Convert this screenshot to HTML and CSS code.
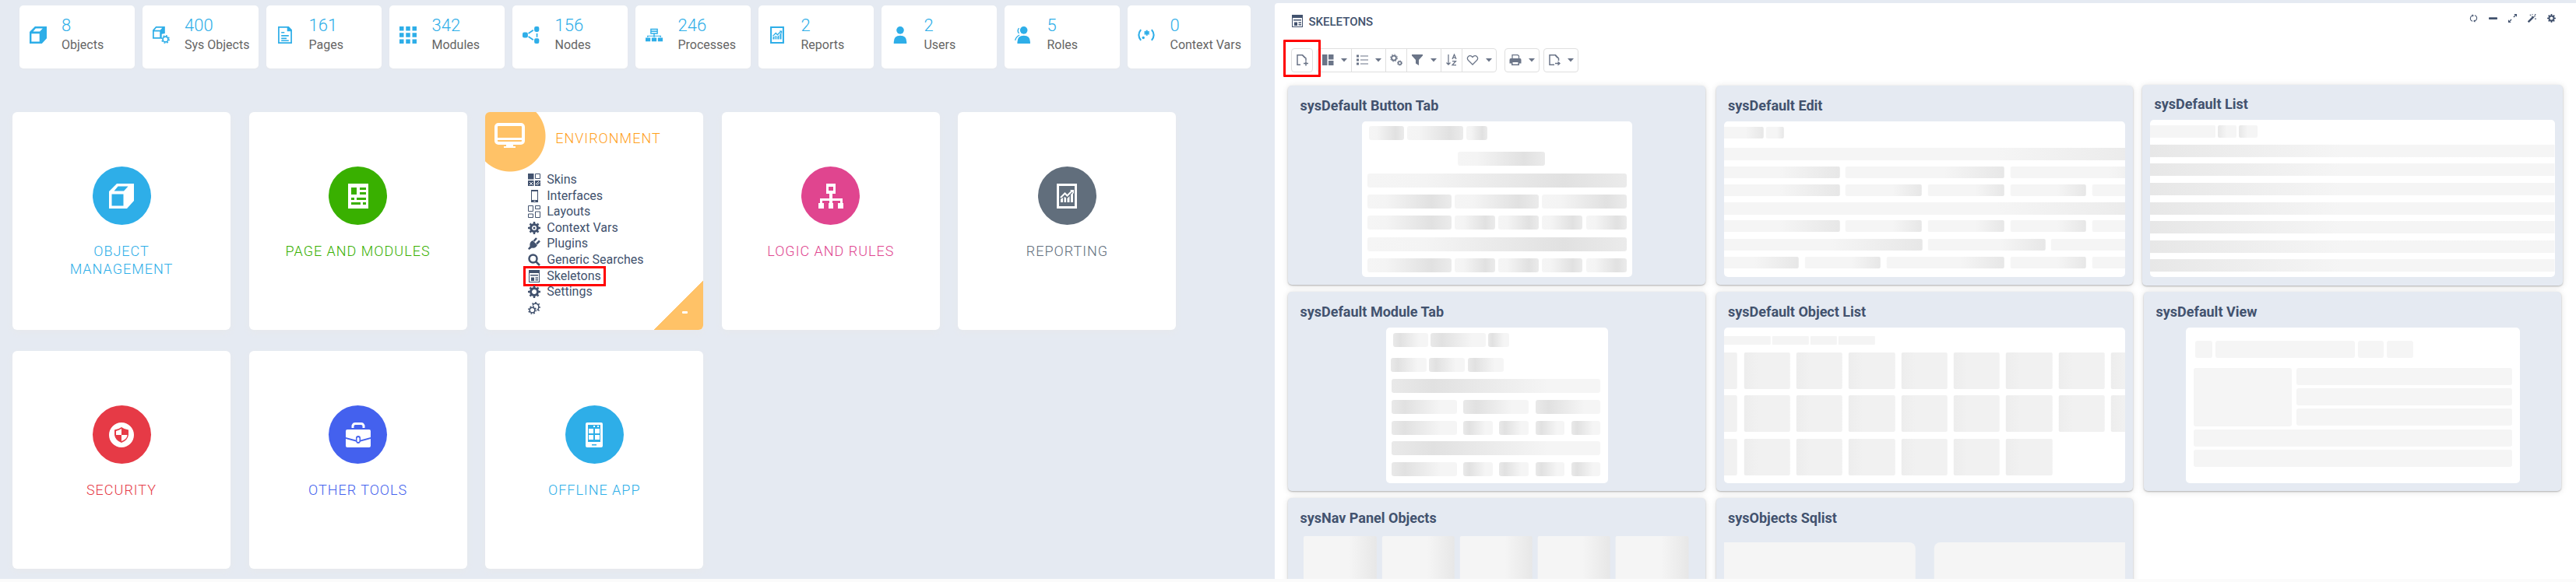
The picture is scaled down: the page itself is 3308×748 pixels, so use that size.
FILE: index.html
```html
<!DOCTYPE html>
<html lang="en">
<head>
<meta charset="utf-8">
<title>Skeletons</title>
<link rel="stylesheet" href="styles.css">
</head>
<body>
<svg class="defs" aria-hidden="true">
  <defs>
    <linearGradient id="g-right"><stop offset="0" stop-color="#f5f5f5"/><stop offset=".22" stop-color="#f4f4f4"/><stop offset=".76" stop-color="#e1e1e1"/><stop offset="1" stop-color="#ebebeb"/></linearGradient>
    <linearGradient id="g-end"><stop offset=".62" stop-color="#f5f5f5"/><stop offset="1" stop-color="#e7e7e7"/></linearGradient>
    <linearGradient id="g-start"><stop offset="0" stop-color="#e7e7e7"/><stop offset=".47" stop-color="#f5f5f5"/></linearGradient>
    <linearGradient id="g-left"><stop offset="0" stop-color="#e9e9e9"/><stop offset=".2" stop-color="#e1e1e1"/><stop offset=".75" stop-color="#f5f5f5"/></linearGradient>
    <linearGradient id="g-tile"><stop offset="0" stop-color="#ededed"/><stop offset=".3" stop-color="#f1f1f1"/></linearGradient>
    <symbol id="i-cube" viewBox="0 0 32 32"><path fill-rule="evenodd" d="M10 0H32V22L23 32H0V10zM11.500 3.500L6.500 9.500H19L24.500 3.500zM3.500 13.500V28.500H18.500V13.500z"/></symbol>
    <symbol id="i-cubegear" viewBox="0 0 32 32"><path fill-rule="evenodd" d="M6 0H23V13L17 14V22L16 23H0V7zM7 2.500L3.500 7H14L18 2.500zM2.500 9.500V20.500H13.500V9.500z"/><circle cx="24" cy="24" r="5" fill="none" stroke="currentColor" stroke-width="2.500"/><circle cx="24" cy="24" r="7" fill="none" stroke="currentColor" stroke-width="2" stroke-dasharray="2.750"/></symbol>
    <symbol id="i-page" viewBox="0 0 32 32"><path fill-rule="evenodd" d="M3 0H23L29 6V32H3zM5.500 2.500V29.500H26.500V9H20V2.500zM9 10H15V12.500H9zM9 16H23V18.500H9zM9 21H19V23.500H9zM9 25.500H23V27.500H9z"/></symbol>
    <symbol id="i-grid" viewBox="0 0 32 32"><path d="M0 0H8V8H0zM12 0H20V8H12zM24 0H32V8H24zM0 12H8V20H0zM12 12H20V20H12zM24 12H32V20H24zM0 24H8V32H0zM12 24H20V32H12zM24 24H32V32H24z"/></symbol>
    <symbol id="i-nodes" viewBox="0 0 32 32"><rect x="0" y="11" width="10" height="10" rx="3"/><rect x="22" y="0" width="9" height="10" rx="3"/><rect x="22" y="22" width="9" height="10" rx="3"/><path d="M11 13L20 7M11 19L20 25M27 13V20" fill="none" stroke="currentColor" stroke-width="2.500"/></symbol>
    <symbol id="i-process" viewBox="0 0 32 32"><path fill-rule="evenodd" d="M9 4H23V14H17V17H29V20H27V18.500H17V20H15V18.500H5V20H3V17H15V14H9zM11 6V8H21V6zM11 10V12H21V10zM0 21H9V28H0zM11.500 21H20.500V28H11.500zM23 21H32V28H23z"/></symbol>
    <symbol id="i-report" viewBox="0 0 32 32"><path d="M4.500 1.500H27.500V30.500H4.500z" fill="none" stroke="currentColor" stroke-width="3"/><path d="M8 20L8 24H11V18zM12.500 17V24H15V18zM16.500 19V24H19.500V16zM21 14V24H24V11z"/><path d="M8 18L13.500 12.500L16.500 15.500L23 9" fill="none" stroke="currentColor" stroke-width="2"/><path d="M20 8H25V13z"/></symbol>
    <symbol id="i-user" viewBox="0 0 32 32"><ellipse cx="16" cy="7" rx="7" ry="7"/><path d="M4 32V29Q4 17 16 17T28 29V32z"/></symbol>
    <symbol id="i-roles" viewBox="0 0 32 32"><ellipse cx="17" cy="7" rx="7" ry="7"/><path d="M5 32V29Q5 17 17 17T29 29V32z"/><path d="M8 3Q4 8 8 13M9 16Q2 20 1 26" fill="none" stroke="currentColor" stroke-width="2"/></symbol>
    <symbol id="i-regex" viewBox="0 0 32 32"><path d="M6 6Q-2 16 6 26M26 6Q34 16 26 26M17 7V17M12.500 9.500L21.500 14.500M21.500 9.500L12.500 14.500" fill="none" stroke="currentColor" stroke-width="3"/><circle cx="10.500" cy="21" r="2.500"/></symbol>
    <symbol id="i-news" viewBox="0 0 32 32"><path fill-rule="evenodd" d="M3 0H29V32H3zM7 5V14H14V5zM18 5V8H26V5zM18 11V14H26V11zM7 18V21H11V18zM14 18V21H26V18zM7 24V27H19V24zM22 24V27H26V24z"/></symbol>
    <symbol id="i-tree" viewBox="0 0 32 32"><path fill-rule="evenodd" d="M10 0H22V13H18V19H31V25H32V32H25V25H28V22H18V25H19V32H13V25H14V22H5V25H7V32H0V25H2V19H14V13H10zM13 4V9H19V4z"/></symbol>
    <symbol id="i-shield" viewBox="0 0 32 32"><path fill-rule="evenodd" d="M16 0A16 16 0 1 1 16 32A16 16 0 1 1 16 0zM16 6Q12 9 7 9.500V16Q8 23 16 26Q24 23 25 16V9.500Q20 9 16 6zM16 8V16H9V11Q13 10 16 8zM16 16H23.500Q23 21.500 16 24z"/></symbol>
    <symbol id="i-bag" viewBox="0 0 32 32"><path d="M9 7V4Q10 1.500 12 1.500H20Q22 1.500 23 4V7" fill="none" stroke="currentColor" stroke-width="3"/><path fill-rule="evenodd" d="M2 9H30Q32 9 32 11V19L19 22.500V20Q19 17 16 17T13 20V22.500L0 19V11Q0 9 2 9zM0 21L13 24.500Q14 27 16 27T19 24.500L32 21V30Q32 32 30 32H2Q0 32 0 30z"/><rect x="14.500" y="19" width="3" height="6" rx="1.500"/></symbol>
    <symbol id="i-phoneapp" viewBox="0 0 32 32"><path fill-rule="evenodd" d="M7 0H25Q27 0 27 2V30Q27 32 25 32H7Q5 32 5 30V2Q5 0 7 0zM8 3V25H24V3zM13 28V29.500H19V28z"/><path d="M9 8H15V14H9zM17 8H23V14H17zM9 16H15V22H9zM17 16H23V22H17zM15 4H17V6H15zM20 4H22V6H20z"/></symbol>
    <symbol id="i-monitor" viewBox="0 0 39 33"><rect x="2" y="2" width="35" height="24" rx="3" fill="none" stroke="currentColor" stroke-width="4"/><path d="M3 19H36V22H3zM15 27H24V30H27V32H12V30H15z"/></symbol>
    <symbol id="i-skins" viewBox="0 0 16 16"><path d="M0 0H7.500V7.500H0zM0 9H7.500V16H0zM9 9H16V16H9z"/><path d="M9.500 .5H15.500V6.500H9.500z" fill="none" stroke="currentColor"/><path d="M2 11L6 15M6 11L2 15M10 14L14 10M11.500 15L15 11.500" stroke="#fff" fill="none"/></symbol>
    <symbol id="i-phone" viewBox="0 0 16 16"><path fill-rule="evenodd" d="M4 0H13V16H4zM5 2V13H12V2zM7.500 14V15H9.500V14z"/></symbol>
    <symbol id="i-layouts" viewBox="0 0 16 16"><path d="M.5 .5H6.500V7.500H.5zM9.500 .5H15.500V4.500H9.500zM.5 11H6.500V15.500H.5zM9.500 8H15.500V15.500H9.500z" fill="none" stroke="currentColor"/></symbol>
    <symbol id="i-gear" viewBox="0 0 16 16"><circle cx="8" cy="8" r="4.500" fill="none" stroke="currentColor" stroke-width="3"/><path d="M8 0V4M8 12V16M0 8H4M12 8H16M2.500 2.500L5 5M11 11L13.500 13.500M2.500 13.500L5 11M11 5L13.500 2.500" fill="none" stroke="currentColor" stroke-width="2.500"/></symbol>
    <symbol id="i-geardot" viewBox="0 0 16 16"><use href="#i-gear"/><circle cx="8" cy="8" r="1.500"/></symbol>
    <symbol id="i-plug" viewBox="0 0 16 16"><path d="M0 14.500L2.500 11.500Q1.500 6 6 4L12 10Q10 14.500 5 13.500L1.500 16z"/><path d="M7.500 5L11 1M11 8.500L15 4.500" stroke="currentColor" stroke-width="2.500"/></symbol>
    <symbol id="i-search" viewBox="0 0 16 16"><circle cx="6.500" cy="6.500" r="5" fill="none" stroke="currentColor" stroke-width="2.500"/><path d="M10 10L15 15" stroke="currentColor" stroke-width="2.500"/></symbol>
    <symbol id="i-skeleton" viewBox="0 0 16 16"><path fill-rule="evenodd" d="M1 0H15V16H1zM2 4V15H14V4z"/><path d="M3 6H13V7.500H3zM4 9.500H8V14H4zM9.500 9.500H13V11H9.500zM9.500 12H13V13.500H9.500z"/></symbol>
    <symbol id="i-gears" viewBox="0 0 16 16"><g fill="none" stroke="currentColor"><circle cx="5.500" cy="10.500" r="3.300" stroke-width="1.500"/><circle cx="5.500" cy="10.500" r="4.700" stroke-width="1.500" stroke-dasharray="1.850"/><path d="M6 4.500Q7 1.900 10 1.900Q14.300 3 13.800 7Q13.500 9.500 11.800 10.800" stroke-width="1.500"/><path d="M7 3L5.500 1.500M10 2V0M13 4L14.800 2.200M14 7H16M12.500 9.500L14.500 11.500" stroke-width="1.500"/></g></symbol>
    <symbol id="i-gears2" viewBox="0 0 16 16"><g fill="none" stroke="currentColor"><circle cx="5" cy="5.500" r="3" stroke-width="1.750"/><circle cx="5" cy="5.500" r="4.500" stroke-width="1" stroke-dasharray="1.760"/><circle cx="12.500" cy="12" r="2" stroke-width="1.500"/><circle cx="12.500" cy="12" r="3" stroke-width="1" stroke-dasharray="1.180"/></g></symbol>
    <symbol id="i-new" viewBox="0 0 16 16"><path d="M6 14.300H2V1.700H8.500L13 6V9M10 12.500H16M13 9.500V15.500" fill="none" stroke="currentColor" stroke-width="1.500"/><path d="M8.500 1L13.500 6H11.500L8.500 3z"/></symbol>
    <symbol id="i-export" viewBox="0 0 16 16"><path d="M8 14.300H2V1.700H9.500L13.500 6V9M9 12.500H15" fill="none" stroke="currentColor" stroke-width="1.500"/><path d="M12.500 9.500L16 12.500L12.500 15.500zM9 1L14 6H12L9 3z"/></symbol>
    <symbol id="i-board" viewBox="0 0 16 16"><path d="M1 1H7.500V15H1zM9 1H15.500V7.500H9zM9 9H15.500V15H9z"/></symbol>
    <symbol id="i-list" viewBox="0 0 16 16"><path d="M1 1.500H4V4.500H1zM1 6.500H4V9.500H1zM1 11.500H4V14.500H1zM6 2.500H16V3.500H6zM6 7.500H16V8.500H6zM6 12.500H16V13.500H6z"/></symbol>
    <symbol id="i-filter" viewBox="0 0 16 16"><path d="M1 1H15V2.500L10 8V15L6 12.500V8L1 2.500z"/></symbol>
    <symbol id="i-sort" viewBox="0 0 16 16"><path d="M4 1V14M1.500 11.500L4 14L6.500 11.500M9 7L11.500 1L14 7M10 5H13M9 9.500H13.500L9 14.500H14" fill="none" stroke="currentColor" stroke-width="1.250"/></symbol>
    <symbol id="i-heart" viewBox="0 0 16 16"><path d="M8 14L2.500 8.500C-.5 5 4 0 8 4.500C12 0 16.500 5 13.500 8.500z" fill="none" stroke="currentColor" stroke-width="1.250"/></symbol>
    <symbol id="i-print" viewBox="0 0 16 16"><path d="M4 6V1.500H11L12.500 3V6" fill="none" stroke="currentColor" stroke-width="1.250"/><path fill-rule="evenodd" d="M2 6H14Q15.500 6 15.500 8V12.500H13V15H3V12.500H.5V8Q.5 6 2 6zM4.500 11V13.500H11.500V11z"/></symbol>
    <symbol id="i-caret" viewBox="0 0 8 5"><path d="M0 0H8L4 4.500z"/></symbol>
    <symbol id="i-refresh" viewBox="0 0 16 16"><path d="M6 13.500Q1.500 12 2 7.500Q2.500 4 6 2.700M10 2.500Q14.500 4 14 8.500Q13.500 12 10 13.300" fill="none" stroke="currentColor" stroke-width="1.500"/><path d="M5.500 .5L8.500 3L5.500 5.500zM10.500 10.500L7.500 13L10.500 15.500z"/></symbol>
    <symbol id="i-minus" viewBox="0 0 16 16"><rect x="0" y="6" width="16" height="4" rx="1"/></symbol>
    <symbol id="i-expand" viewBox="0 0 16 16"><path d="M10.500 0H16V5.500zM0 10.500L5.500 16H0z"/><path d="M10 6L13 3M3 13L6 10" stroke="currentColor" stroke-width="2"/></symbol>
    <symbol id="i-wand" viewBox="0 0 16 16"><path d="M1 15L11 5" stroke="currentColor" stroke-width="3.500"/><path d="M4 1H6V3H4zM8 0H9.500V1.500H8zM13 0H15V2H13zM13.500 8H15.500V10H13.500zM12 3H14V5H12zM7 3.500H8.500V5H7z"/></symbol>
  </defs>
</svg>

<div class="app">
  <main class="dashboard">
    <ul class="stats">
      <li class="stat"><svg class="stat-icon"><use href="#i-cube"/></svg><div><div class="stat-value">8</div><div class="stat-label">Objects</div></div></li>
      <li class="stat"><svg class="stat-icon"><use href="#i-cubegear"/></svg><div><div class="stat-value">400</div><div class="stat-label">Sys Objects</div></div></li>
      <li class="stat"><svg class="stat-icon"><use href="#i-page"/></svg><div><div class="stat-value">161</div><div class="stat-label">Pages</div></div></li>
      <li class="stat"><svg class="stat-icon"><use href="#i-grid"/></svg><div><div class="stat-value">342</div><div class="stat-label">Modules</div></div></li>
      <li class="stat"><svg class="stat-icon"><use href="#i-nodes"/></svg><div><div class="stat-value">156</div><div class="stat-label">Nodes</div></div></li>
      <li class="stat"><svg class="stat-icon"><use href="#i-process"/></svg><div><div class="stat-value">246</div><div class="stat-label">Processes</div></div></li>
      <li class="stat"><svg class="stat-icon"><use href="#i-report"/></svg><div><div class="stat-value">2</div><div class="stat-label">Reports</div></div></li>
      <li class="stat"><svg class="stat-icon"><use href="#i-user"/></svg><div><div class="stat-value">2</div><div class="stat-label">Users</div></div></li>
      <li class="stat"><svg class="stat-icon"><use href="#i-roles"/></svg><div><div class="stat-value">5</div><div class="stat-label">Roles</div></div></li>
      <li class="stat"><svg class="stat-icon"><use href="#i-regex"/></svg><div><div class="stat-value">0</div><div class="stat-label">Context Vars</div></div></li>
    </ul>

    <div class="tiles">
      <a class="tile sky" href="#objects"><span class="disc"><svg><use href="#i-cube"/></svg></span><span class="tile-title">OBJECT MANAGEMENT</span></a>
      <a class="tile green" href="#pages"><span class="disc"><svg><use href="#i-news"/></svg></span><span class="tile-title">PAGE AND MODULES</span></a>
      <section class="tile open">
        <header class="open-head"><svg class="monitor"><use href="#i-monitor"/></svg><h2 class="open-title">ENVIRONMENT</h2></header>
        <nav class="env-list">
          <a href="#skins"><svg><use href="#i-skins"/></svg>Skins</a>
          <a href="#interfaces"><svg><use href="#i-phone"/></svg>Interfaces</a>
          <a href="#layouts"><svg><use href="#i-layouts"/></svg>Layouts</a>
          <a href="#vars"><svg><use href="#i-geardot"/></svg>Context Vars</a>
          <a href="#plugins"><svg><use href="#i-plug"/></svg>Plugins</a>
          <a href="#searches"><svg><use href="#i-search"/></svg>Generic Searches</a>
          <a href="#skeletons" class="marked"><svg><use href="#i-skeleton"/></svg>Skeletons</a>
          <a href="#settings"><svg><use href="#i-gear"/></svg>Settings</a>
          <a href="#more" aria-label="More"><svg><use href="#i-gears"/></svg></a>
        </nav>
        <button class="fold" type="button" aria-label="Collapse"><span class="fold-dash"></span></button>
      </section>
      <a class="tile pink" href="#logic"><span class="disc"><svg><use href="#i-tree"/></svg></span><span class="tile-title">LOGIC AND RULES</span></a>
      <a class="tile slate" href="#reporting"><span class="disc"><svg><use href="#i-report"/></svg></span><span class="tile-title">REPORTING</span></a>
      <a class="tile red" href="#security"><span class="disc"><svg><use href="#i-shield"/></svg></span><span class="tile-title">SECURITY</span></a>
      <a class="tile blue" href="#tools"><span class="disc"><svg><use href="#i-bag"/></svg></span><span class="tile-title">OTHER TOOLS</span></a>
      <a class="tile sky" href="#offline"><span class="disc"><svg><use href="#i-phoneapp"/></svg></span><span class="tile-title">OFFLINE APP</span></a>
    </div>
  </main>

  <section class="panel">
    <header class="panel-head">
      <svg class="panel-icon"><use href="#i-skeleton"/></svg>
      <h1 class="panel-title">SKELETONS</h1>
      <div class="panel-tools">
        <button type="button" aria-label="Refresh"><svg><use href="#i-refresh"/></svg></button>
        <button type="button" aria-label="Minimize"><svg><use href="#i-minus"/></svg></button>
        <button type="button" aria-label="Expand"><svg><use href="#i-expand"/></svg></button>
        <button type="button" aria-label="Wizard"><svg><use href="#i-wand"/></svg></button>
        <button type="button" aria-label="Settings"><svg><use href="#i-gear"/></svg></button>
      </div>
    </header>

    <div class="toolbar">
      <div class="group first"><button type="button" aria-label="New"><svg class="ico"><use href="#i-new"/></svg></button></div>
      <div class="group">
        <button type="button" aria-label="View"><svg class="ico"><use href="#i-board"/></svg><svg class="caret"><use href="#i-caret"/></svg></button>
        <button type="button" aria-label="List"><svg class="ico"><use href="#i-list"/></svg><svg class="caret"><use href="#i-caret"/></svg></button>
        <button type="button" aria-label="Options"><svg class="ico"><use href="#i-gears2"/></svg></button>
        <button type="button" aria-label="Filter"><svg class="ico"><use href="#i-filter"/></svg><svg class="caret"><use href="#i-caret"/></svg></button>
        <button type="button" aria-label="Sort"><svg class="ico"><use href="#i-sort"/></svg></button>
        <button type="button" aria-label="Favorites"><svg class="ico"><use href="#i-heart"/></svg><svg class="caret"><use href="#i-caret"/></svg></button>
      </div>
      <div class="group print"><button type="button" aria-label="Print"><svg class="ico"><use href="#i-print"/></svg><svg class="caret"><use href="#i-caret"/></svg></button></div>
      <div class="group"><button type="button" aria-label="Export"><svg class="ico"><use href="#i-export"/></svg><svg class="caret"><use href="#i-caret"/></svg></button></div>
    </div>

    <div class="cards">
      <article class="card">
        <h2>sysDefault Button Tab</h2>
        <svg class="preview white medium" viewBox="0 0 347 200"><g fill="url(#g-right)">
          <rect x="9" y="6" width="45" height="18" rx="3"/><rect x="58" y="6" width="72" height="18" rx="3"/><rect x="134" y="6" width="27" height="18" rx="3"/>
          <rect x="123" y="39" width="112" height="18" rx="3"/>
          <rect x="7" y="67" width="333" height="18" rx="3"/>
          <rect x="7" y="94" width="108" height="18" rx="3"/><rect x="119" y="94" width="108" height="18" rx="3"/><rect x="231" y="94" width="109" height="18" rx="3"/>
          <g id="quad"><rect x="7" y="121" width="108" height="18" rx="3"/><rect x="119" y="121" width="52" height="18" rx="3"/><rect x="175" y="121" width="52" height="18" rx="3"/><rect x="231" y="121" width="52" height="18" rx="3"/><rect x="288" y="121" width="52" height="18" rx="3"/></g>
          <rect x="7" y="149" width="333" height="18" rx="3"/>
          <use href="#quad" y="55"/>
        </g></svg>
      </article>
      <article class="card">
        <h2>sysDefault Edit</h2>
        <svg class="preview white" viewBox="0 0 516 200" preserveAspectRatio="xMidYMid slice"><g fill="url(#g-end)">
          <rect x="-10" y="7" width="61" height="15" rx="2"/><rect x="54" y="7" width="23" height="15" rx="2"/>
          <rect x="-50" y="34" width="646" height="16"/>
          <rect x="-55" y="58" width="204" height="15" rx="2"/><rect x="156" y="58" width="204" height="15" rx="2"/><rect x="368" y="58" width="204" height="15" rx="2"/>
          <g id="edit5"><rect x="-55" y="81" width="204" height="15" rx="2"/><rect x="156" y="81" width="98" height="15" rx="2"/><rect x="262" y="81" width="98" height="15" rx="2"/><rect x="368" y="81" width="97" height="15" rx="2"/><rect x="473" y="81" width="98" height="15" rx="2"/></g>
          <rect x="-50" y="104" width="646" height="16"/>
          <use href="#edit5" y="46"/>
          <rect x="-55" y="151" width="310" height="15" rx="2"/><rect x="262" y="151" width="151" height="15" rx="2"/><rect x="420" y="151" width="151" height="15" rx="2"/>
          <rect x="-55" y="174" width="151" height="15" rx="2"/><rect x="104" y="174" width="97" height="15" rx="2"/><rect x="209" y="174" width="151" height="15" rx="2"/><rect x="368" y="174" width="97" height="15" rx="2"/><rect x="473" y="174" width="98" height="15" rx="2"/>
        </g></svg>
      </article>
      <article class="card raised">
        <h2>sysDefault List</h2>
        <svg class="preview white" viewBox="0 0 519 202" preserveAspectRatio="xMidYMid slice"><g fill="url(#g-start)">
          <rect x="-10" y="7" width="94" height="16" rx="2" fill="#f5f5f5"/><rect x="87" y="7" width="24" height="16" rx="2"/><rect x="114" y="7" width="24" height="16" rx="2"/>
          <rect y="32" width="519" height="16"/><rect y="56" width="519" height="16"/><rect y="81" width="519" height="16"/><rect y="106" width="519" height="16"/><rect y="130" width="519" height="16"/><rect y="155" width="519" height="16"/><rect y="179" width="519" height="16"/>
        </g></svg>
      </article>
      <article class="card">
        <h2>sysDefault Module Tab</h2>
        <svg class="preview white small" viewBox="0 0 285 200"><g fill="url(#g-left)">
          <rect x="9" y="7" width="45" height="18" rx="3"/><rect x="57" y="7" width="71" height="18" rx="3"/><rect x="131" y="7" width="27" height="18" rx="3"/>
          <rect x="6" y="39" width="46" height="18" rx="3"/><rect x="55" y="39" width="46" height="18" rx="3"/><rect x="105" y="39" width="46" height="18" rx="3"/>
          <rect x="7" y="66" width="268" height="18" rx="3"/>
          <rect x="7" y="93" width="84" height="18" rx="3"/><rect x="99" y="93" width="84" height="18" rx="3"/><rect x="192" y="93" width="83" height="18" rx="3"/>
          <g id="mod5"><rect x="7" y="120" width="84" height="18" rx="3"/><rect x="99" y="120" width="38" height="18" rx="3"/><rect x="145" y="120" width="38" height="18" rx="3"/><rect x="192" y="120" width="37" height="18" rx="3"/><rect x="238" y="120" width="37" height="18" rx="3"/></g>
          <rect x="7" y="146" width="268" height="18" rx="3"/>
          <use href="#mod5" y="53"/>
        </g></svg>
      </article>
      <article class="card">
        <h2>sysDefault Object List</h2>
        <svg class="preview white" viewBox="0 0 516 200" preserveAspectRatio="xMidYMid slice"><g fill="url(#g-tile)">
          <g fill="#f4f4f4"><rect x="-5" y="11" width="65" height="11" rx="1"/><rect x="62" y="11" width="47" height="11" rx="1"/><rect x="111" y="11" width="34" height="11" rx="1"/><rect x="147" y="11" width="47" height="11" rx="1"/></g>
          <g id="six"><rect x="-42" y="32" width="59" height="47" rx="2"/><rect x="26" y="32" width="59" height="47" rx="2"/><rect x="93" y="32" width="59" height="47" rx="2"/><rect x="160" y="32" width="60" height="47" rx="2"/><rect x="228" y="32" width="59" height="47" rx="2"/><rect x="295" y="32" width="59" height="47" rx="2"/><rect x="362" y="32" width="60" height="47" rx="2"/></g>
          <g id="two"><rect x="430" y="32" width="59" height="47" rx="2"/><rect x="497" y="32" width="59" height="47" rx="2"/></g>
          <use href="#six" y="55"/><use href="#two" y="55"/><use href="#six" y="111"/>
        </g></svg>
      </article>
      <article class="card">
        <h2>sysDefault View</h2>
        <svg class="preview white wide" viewBox="0 0 429 200"><g fill="#f5f5f5">
          <rect x="12" y="17" width="22" height="22" rx="3"/><rect x="38" y="17" width="179" height="22" rx="3"/><rect x="221" y="17" width="33" height="22" rx="3"/><rect x="258" y="17" width="34" height="22" rx="3"/>
          <rect x="10" y="52" width="126" height="75" rx="3"/><rect x="142" y="52" width="277" height="22" rx="3"/><rect x="142" y="78" width="277" height="22" rx="3"/><rect x="142" y="104" width="277" height="22" rx="3"/>
          <rect x="10" y="131" width="409" height="22" rx="3"/><rect x="10" y="157" width="409" height="22" rx="3"/>
        </g></svg>
      </article>
      <article class="card">
        <h2>sysNav Panel Objects</h2>
        <svg class="preview" viewBox="0 0 516 200"><g fill="url(#g-end)">
          <rect x="10" y="3" width="94" height="190" rx="2"/><rect x="111" y="3" width="93" height="190" rx="2"/><rect x="211" y="3" width="93" height="190" rx="2"/><rect x="311" y="3" width="93" height="190" rx="2"/><rect x="411" y="3" width="94" height="190" rx="2"/>
        </g></svg>
      </article>
      <article class="card">
        <h2>sysObjects Sqlist</h2>
        <svg class="preview" viewBox="0 0 516 200" preserveAspectRatio="xMidYMid slice"><g fill="#f5f5f5">
          <rect x="-20" y="11" width="266" height="180" rx="8"/><rect x="270" y="11" width="266" height="180" rx="8"/>
        </g></svg>
      </article>
    </div>
  </section>
</div>
</body>
</html>
```
FILE: styles.css
```css
* { box-sizing: border-box; }
body {
  margin: 0;
  background: #fbfbfb;
  color: #42526e;
  font-family: Roboto, "Liberation Sans", sans-serif;
  font-size: 16px;
}
h1, h2, ul { margin: 0; padding: 0; }
a { color: inherit; text-decoration: none; }
svg { display: block; fill: currentColor; }
button { padding: 0; border: 0; background: none; color: inherit; font: inherit; }
.defs { position: absolute; width: 0; height: 0; }

.app {
  display: grid;
  grid-template-columns: 49.5% 1fr;
  height: 100vh;
  padding-bottom: 4px;
  background: #fbfbfb;
  overflow: hidden;
}
.dashboard, .panel { min-height: 0; overflow: hidden; }
.dashboard { background: #e5eaf2; padding: 7px 16px 0; }

/* counters */
.stats {
  display: flex;
  gap: 10px;
  margin: 0 9px 56px;
  list-style: none;
}
.stat {
  display: flex;
  align-items: center;
  gap: 19px;
  min-width: 148px;
  height: 81px;
  padding: 0 12px 5px 13px;
  border-radius: 5px;
  background: #fff;
  box-shadow: 0 1px 2px #e6e8ec;
  white-space: nowrap;
}
.stat-icon { width: 22px; height: 24px; color: #2eaee8; flex: none; }
.stat-value { color: #2eaee8; font-size: 22px; font-weight: 300; line-height: 26px; }
.stat-label { color: #666; line-height: 24px; }

/* tiles */
.tiles {
  display: grid;
  grid-template-columns: repeat(auto-fill, 280px);
  justify-content: space-between;
  gap: 27px 20px;
  margin-right: 111px;
}
.tile {
  display: flex;
  flex-direction: column;
  align-items: center;
  height: 280px;
  padding: 70px 36px 0;
  border-radius: 6px;
  background: #fff;
  box-shadow: 0 3px 8px #e7e9ec;
}
.disc {
  display: grid;
  place-items: center;
  width: 75px;
  height: 75px;
  border-radius: 50%;
  background: currentColor;
}
.disc svg { width: 32px; height: 32px; color: #fff; }
.tile-title {
  margin-top: 22px;
  font-size: 18px;
  font-weight: 300;
  line-height: 23px;
  letter-spacing: 1px;
  text-align: center;
}
.sky { color: #2eaee8; }
.green { color: #39b000; }
.pink { color: #e0458f; }
.slate { color: #616e7c; }
.red { color: #e63a46; }
.blue { color: #4461ee; }

.open {
  position: relative;
  align-items: stretch;
  padding: 14px 0 18px;
  overflow: hidden;
  background: radial-gradient(circle at 32px 31px, #ffc267 45px, #fff 46px);
}
.open-head { display: flex; align-items: flex-start; gap: 39px; padding-left: 12px; }
.monitor { width: 39px; height: 33px; color: #fff; }
.open-title {
  padding-top: 8px;
  color: #ff9f1c;
  font-size: 18px;
  font-weight: 300;
  line-height: 23px;
  letter-spacing: 1px;
}
.env-list {
  flex: 1;
  display: grid;
  grid-auto-rows: 1fr;
  align-items: center;
  justify-items: start;
  margin: 30px 0 0 52px;
}
.env-list a { display: flex; align-items: center; gap: 8px; height: 20px; padding: 0 3px; line-height: 20px; }
.env-list svg { width: 16px; height: 16px; }
.env-list .marked { outline: 3px solid #f00; }
.fold {
  position: absolute;
  right: 0;
  bottom: 0;
  width: 63px;
  height: 63px;
  background: linear-gradient(135deg, transparent 50%, #ffc267 50%);
}
.fold-dash { display: block; width: 7px; height: 3px; margin: 18px 0 0 36px; background: #fff; border-radius: 1px; }

/* skeleton panel */
.panel {
  margin-top: 4px;
  padding: 0 17px;
  border-radius: 4px 0 0 0;
  background: #fff;
  box-shadow: 0 -4px 0 4px #e5eaf2;
}
.panel-head { display: flex; align-items: center; gap: 6px; height: 46px; padding: 0 9px 0 4px; }
.panel-icon { width: 16px; height: 18px; }
.panel-title { padding-top: 2px; font-size: 15px; font-weight: 500; line-height: 20px; }
.panel-tools { display: flex; gap: 14px; margin-left: auto; padding-bottom: 8px; }
.panel-tools svg { width: 11px; height: 11px; }

.toolbar { display: flex; align-items: center; height: 54px; color: #6b7588; }
.group {
  display: flex;
  height: 31px;
  margin-right: 5px;
  border: 1px solid #dfdfdf;
  border-radius: 4px;
}
.group.first { position: relative; margin-left: 4px; }
.group.first::after {
  content: "";
  position: absolute;
  inset: -12px -11px -7px;
  border: 3px solid #f00;
  border-radius: 1px;
  pointer-events: none;
}
.group.print { margin-left: 5px; }
.group button { display: flex; align-items: center; gap: 9px; padding: 0 5px; border-left: 1px solid #dfdfdf; }
.group button:first-child { border-left: 0; }
.ico { width: 16px; height: 16px; }
.caret { width: 8px; height: 5px; }

.cards {
  display: grid;
  grid-template-columns: repeat(3, 1fr);
  gap: 9px 14px;
  padding: 6px 2px 16px 0;
}
.card {
  display: flex;
  flex-direction: column;
  min-width: 0;
  padding: 0 10px 10px;
  border-radius: 5px;
  background: #e5eaf2;
  box-shadow: 0 1px 2px rgba(0, 0, 0, .25), 0 1px 8px rgba(0, 0, 0, .12);
}
.card h2 { padding: 14px 5px 8px; font-size: 18px; font-weight: 700; line-height: 24px; }
.card.raised { margin: -1px -2px; }
.card.raised h2 { padding-top: 13px; }
.raised .preview { height: 202px; }
.preview { width: 100%; height: 200px; border-radius: 5px; overflow: hidden; align-self: center; }
.preview.white { background: #fff; }
.preview.medium { width: 347px; }
.preview.small { width: 285px; }
.preview.wide { width: 429px; }
```
